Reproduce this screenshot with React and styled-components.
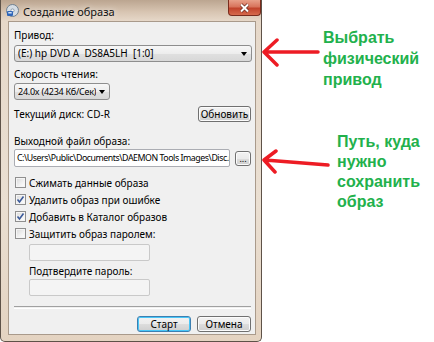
import React from "react";
import styled, { createGlobalStyle } from "styled-components";

const GlobalStyle = createGlobalStyle`
  html, body {
    margin: 0;
    padding: 0;
    background: #ffffff;
    width: 434px;
    height: 342px;
    overflow: hidden;
  }
  body {
    font-family: "Noto Sans", "Liberation Sans", sans-serif;
    font-size: 10px;
    color: #000;
  }
`;

const Page = styled.div`
  display: flex;
  width: 434px;
  height: 342px;
`;

const Window = styled.div`
  width: 262px;
  height: 342px;
  box-sizing: border-box;
  border: 1px solid #5e5248;
  border-top: none;
  border-radius: 0 0 5px 5px;
  background: linear-gradient(
    to bottom,
    #bba590 0px,
    #d8c5b2 12px,
    #e6d8c9 21px,
    #eadfd2 60%,
    #e4d3c1 100%
  );
  display: flex;
  flex-direction: column;
`;

const TitleBar = styled.div`
  height: 21px;
  display: flex;
  align-items: flex-start;
  padding-left: 5px;
`;

const TitleIcon = styled.svg`
  margin-top: 4px;
  flex: none;
`;

const TitleText = styled.div`
  margin-top: 4px;
  margin-left: 4px;
  font-size: 11px;
  line-height: 15px;
  color: #111;
  text-shadow: 0 0 6px rgba(255, 255, 255, 0.9);
`;

const CloseButton = styled.div`
  margin-left: auto;
  width: 33px;
  height: 16px;
  box-sizing: border-box;
  border: 1px solid #7a2c1d;
  border-top: none;
  border-radius: 0 0 4px 4px;
  background: linear-gradient(
    to bottom,
    #e8a089 0%,
    #d8745c 45%,
    #c1432b 55%,
    #d66a4c 100%
  );
  display: flex;
  align-items: center;
  justify-content: center;
`;

const Client = styled.div`
  flex: 1;
  margin: 0 5px 6px 7px;
  border: 1px solid #a99a8b;
  background: #f0f0f0;
  padding: 7px 4px 0 5px;
  display: flex;
  flex-direction: column;
`;

const Label = styled.div`
  line-height: 13px;
  margin-top: ${(p) => p.$mt || 0}px;
  padding-left: ${(p) => p.$indent || 0}px;
  white-space: nowrap;
`;

const Combo = styled.div`
  margin-top: ${(p) => p.$mt || 0}px;
  width: ${(p) => p.$width};
  height: 17px;
  box-sizing: border-box;
  border: 1px solid #8e8e8e;
  border-radius: 3px;
  background: linear-gradient(
    to bottom,
    #f7f7f7 0%,
    #ededed 50%,
    #e0e0e0 51%,
    #d8d8d8 100%
  );
  display: flex;
  align-items: center;
  padding: 0 4px 0 3px;
  white-space: pre;
  line-height: 15px;
  font-size: ${(p) => p.$fs || 10}px;
  letter-spacing: ${(p) => p.$ls || 0}px;
`;

const ComboText = styled.span`
  flex: 1;
  min-width: 0;
  overflow: hidden;
`;

const ComboArrow = styled.span`
  flex: none;
  width: 0;
  height: 0;
  border-left: 3.5px solid transparent;
  border-right: 3.5px solid transparent;
  border-top: 4px solid #000;
  margin-left: 3px;
`;

const Row = styled.div`
  margin-top: ${(p) => p.$mt || 0}px;
  display: flex;
  align-items: center;
  justify-content: ${(p) => p.$justify || "flex-start"};
  gap: ${(p) => p.$gap || 0}px;
`;

const Spacer = styled.div`
  flex: 1;
`;

const Button = styled.div`
  flex: none;
  width: ${(p) => p.$width}px;
  height: ${(p) => p.$height || 16}px;
  box-sizing: border-box;
  border: 1px solid ${(p) => (p.$default ? "#3c7fb1" : "#707070")};
  box-shadow: ${(p) =>
    p.$default ? "inset 0 0 0 1px #48c6f7" : "inset 0 0 0 1px #fbfbfb"};
  border-radius: 3px;
  background: linear-gradient(
    to bottom,
    #f2f2f2 0%,
    #ebebeb 50%,
    #dddddd 51%,
    #cfcfcf 100%
  );
  display: flex;
  align-items: center;
  justify-content: center;
  line-height: 13px;
  font-size: ${(p) => p.$fs || 10}px;
`;

const TextInput = styled.div`
  flex: ${(p) => (p.$grow ? "1 1 0" : "none")};
  min-width: 0;
  width: ${(p) => (p.$width ? `${p.$width}px` : "auto")};
  height: ${(p) => p.$height || 17}px;
  margin-top: ${(p) => p.$mt || 0}px;
  margin-left: ${(p) => p.$ml || 0}px;
  box-sizing: border-box;
  border: 1px solid ${(p) => (p.$disabled ? "#c9c9c9" : "#abadb3")};
  border-radius: 2px;
  background: ${(p) => (p.$disabled ? "#f4f4f4" : "#ffffff")};
  padding: 0 2px;
  display: flex;
  align-items: center;
  overflow: hidden;
`;

const InputText = styled.span`
  white-space: nowrap;
  font-size: 8.8px;
  letter-spacing: -0.45px;
`;

const CheckList = styled.div`
  margin-top: 7px;
  display: flex;
  flex-direction: column;
`;

const CheckRow = styled.div`
  height: 17px;
  display: flex;
  align-items: center;
  padding-left: 1px;
  gap: 3px;
`;

const CheckBox = styled.div`
  width: 11px;
  height: 11px;
  box-sizing: border-box;
  border: 1px solid #8f8f8f;
  background: linear-gradient(135deg, #d8d8d8 0%, #f2f2f2 60%, #ffffff 100%);
  box-shadow: inset 0 0 0 1px #f5f5f5;
  display: flex;
  align-items: center;
  justify-content: center;
`;

const Separator = styled.div`
  margin-top: 10px;
  height: 1px;
  border-top: 1px solid #a0a0a0;
  border-bottom: 1px solid #ffffff;
`;

const Notes = styled.div`
  flex: 1;
  padding-top: 27px;
  display: flex;
  flex-direction: column;
`;

const Note = styled.div`
  display: flex;
  align-items: flex-start;
  margin-top: ${(p) => p.$mt || 0}px;
`;

const Arrow = styled.svg`
  flex: none;
  margin-top: ${(p) => p.$mt || 0}px;
`;

const NoteText = styled.div`
  margin-left: 3px;
  font-family: "Liberation Sans", Arial, sans-serif;
  font-weight: bold;
  font-size: 16px;
  line-height: ${(p) => p.$lh}px;
  color: #22b14c;
`;

const Check = ({ checked, children }) => (
  <CheckRow>
    <CheckBox>
      {checked && (
        <svg width="9" height="9" viewBox="0 0 9 9">
          <path
            d="M1.5 4.5 L3.5 7 L7.5 1.5"
            fill="none"
            stroke="#3b5a9a"
            strokeWidth="1.6"
          />
        </svg>
      )}
    </CheckBox>
    <span>{children}</span>
  </CheckRow>
);

const App = () => {
  return (
    <Page>
      <GlobalStyle />
      <Window>
        <TitleBar>
          <TitleIcon width="13" height="13" viewBox="0 0 13 13">
            <circle cx="6.5" cy="6.5" r="6" fill="#d6dde4" stroke="#6e7f90" />
            <circle cx="6.5" cy="6.5" r="1.6" fill="#ffffff" stroke="#8a98a6" />
            <rect x="1" y="7" width="6" height="5" rx="1" fill="#2f66b8" />
            <rect x="2.3" y="8" width="3.4" height="1.5" fill="#cfe0f5" />
          </TitleIcon>
          <TitleText>Создание образа</TitleText>
          <CloseButton>
            <svg width="11" height="10" viewBox="0 0 11 10">
              <path
                d="M2 1.5 L9 8.5 M9 1.5 L2 8.5"
                stroke="#6b2a20"
                strokeWidth="3.4"
              />
              <path
                d="M2 1.5 L9 8.5 M9 1.5 L2 8.5"
                stroke="#ffffff"
                strokeWidth="2"
              />
            </svg>
          </CloseButton>
        </TitleBar>

        <Client>
          <Label>Привод:</Label>
          <Combo $mt={3} $width="238px">
            <ComboText>(E:) hp DVD A  DS8A5LH  [1:0]</ComboText>
            <ComboArrow />
          </Combo>

          <Label $mt={6}>Скорость чтения:</Label>
          <Combo $mt={2} $width="96px" $fs={9} $ls={-0.25}>
            <ComboText>24.0x (4234 Кб/Сек)</ComboText>
            <ComboArrow />
          </Combo>

          <Row $mt={6}>
            <span>Текущий диск: CD-R</span>
            <Spacer />
            <Button $width={53}>Обновить</Button>
          </Row>

          <Label $mt={13}>Выходной файл образа:</Label>
          <Row $mt={1} $gap={5}>
            <TextInput $grow $height={18}>
              <InputText>
                C:\Users\Public\Documents\DAEMON Tools Images\Disc.mds
              </InputText>
            </TextInput>
            <Button $width={16} $height={15} $fs={9}>
              ...
            </Button>
          </Row>

          <CheckList>
            <Check>Сжимать данные образа</Check>
            <Check checked>Удалить образ при ошибке</Check>
            <Check checked>Добавить в Каталог образов</Check>
            <Check>Защитить образ паролем:</Check>
          </CheckList>

          <TextInput $disabled $width={121} $mt={2} $ml={15} />
          <Label $mt={4} $indent={15}>
            Подтвердите пароль:
          </Label>
          <TextInput $disabled $width={121} $mt={1} $ml={15} />

          <Separator />

          <Row $mt={7} $justify="flex-end" $gap={6}>
            <Button $width={54} $default>
              Старт
            </Button>
            <Button $width={54}>Отмена</Button>
          </Row>
        </Client>
      </Window>

      <Notes>
        <Note>
          <Arrow $mt={10} width="58" height="30" viewBox="0 0 58 30">
            <path
              d="M56 15 L3 15 M15 3 L2 15 L15 28"
              fill="none"
              stroke="#ed1c24"
              strokeWidth="3.5"
              strokeLinecap="round"
              strokeLinejoin="round"
            />
          </Arrow>
          <NoteText $lh={21}>
            Выбрать
            <br />
            физический
            <br />
            привод
          </NoteText>
        </Note>
        <Note $mt={42}>
          <Arrow $mt={10} width="72" height="40" viewBox="0 0 72 40">
            <path
              d="M66 23 L3 18 M14 9 L2 18 L13 30"
              fill="none"
              stroke="#ed1c24"
              strokeWidth="3.5"
              strokeLinecap="round"
              strokeLinejoin="round"
            />
          </Arrow>
          <NoteText $lh={20}>
            Путь, куда
            <br />
            нужно
            <br />
            сохранить
            <br />
            образ
          </NoteText>
        </Note>
      </Notes>
    </Page>
  );
};

export default App;
